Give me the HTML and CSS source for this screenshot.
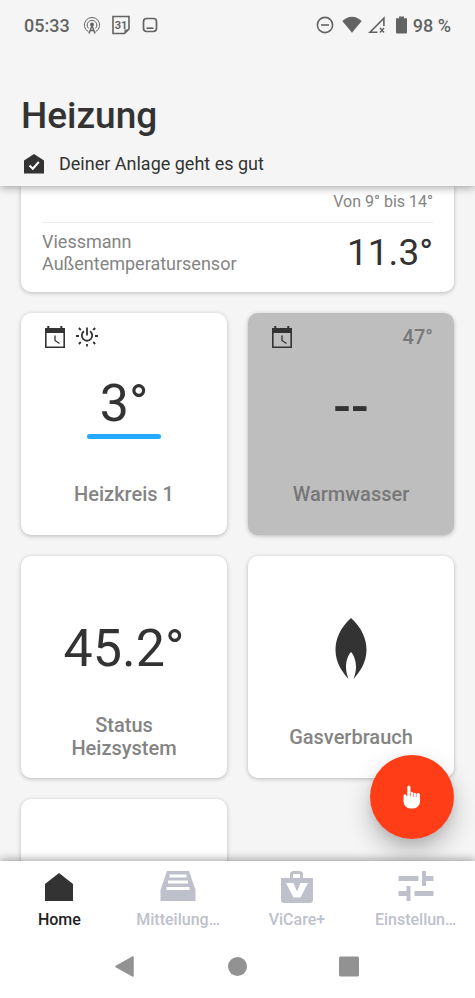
FILE: index.html
```html
<!DOCTYPE html>
<html lang="de">
<head>
<meta charset="utf-8">
<meta name="viewport" content="width=device-width, initial-scale=1">
<title>Heizung</title>
<link rel="stylesheet" href="styles.css">
</head>
<body>
<div class="app">
  <header class="header">
    <div class="statusbar">
      <span class="clock">05:33</span>
      <svg class="s-cast" width="18" height="18" viewBox="0 0 18 18" fill="none" stroke="#636363" stroke-width="1">
        <path d="M5.5 15.8A7.6 7.6 0 1 1 12.500 15.800"/>
        <path d="M5.500 12.400A4.800 4.800 0 1 1 12.500 12.400"/>
        <circle cx="9" cy="8.500" r="2" fill="#636363" stroke="none"/>
        <path d="M9 9.500L6 17.500M9 9.500L12 17.500M7.200 14.500H10.800" stroke-width="1.400"/>
      </svg>
      <svg class="s-cal" width="18" height="20" viewBox="0 0 18 20">
        <path d="M1 1.500H17V14L12.500 18.500H1Z" fill="none" stroke="#636363" stroke-width="1.600"/>
        <path d="M12.500 18.500V14.500H17Z" fill="#636363"/>
        <text x="9" y="13.500" class="cal-day" text-anchor="middle">31</text>
      </svg>
      <svg width="16" height="16" viewBox="0 0 16 16" fill="none" stroke="#636363" stroke-width="1.700">
        <rect x="1.500" y="1.500" width="13" height="13" rx="3.200"/>
        <path d="M4.500 11.200H11.500"/>
      </svg>
      <span class="spacer"></span>
      <svg class="s-dnd" width="18" height="18" viewBox="0 0 18 18" fill="none" stroke="#636363" stroke-width="1.600">
        <circle cx="9" cy="9" r="7.600"/><path d="M5 9H13"/>
      </svg>
      <svg class="s-wifi" width="20" height="18" viewBox="0 0 20 18"><path d="M0.300 5Q10-3.500 19.700 5L10 16.700Z" fill="#636363"/></svg>
      <svg class="s-cell" width="18" height="18" viewBox="0 0 18 18" fill="none" stroke="#636363" stroke-width="1.600">
        <path d="M9.500 16.200H2L15.900 2.300V10"/><path d="M12 12L16 16.500M16 12L12 16.500" stroke-width="1.500"/>
      </svg>
      <svg class="s-bat" width="11" height="18" viewBox="0 0 11 18"><path d="M3 0.500H8V2.200H11V16.500Q11 17.500 10 17.500H1Q0 17.500 0 16.500V2.200H3Z" fill="#636363"/></svg>
      <span>98 %</span>
    </div>
    <h1>Heizung</h1>
    <p class="health">
      <svg width="22" height="22" viewBox="0 0 22 22"><path d="M1 7.500L11 1L21 7.500V20.500H1Z" fill="#333"/><path d="M6.500 12.500L9.800 15.700L15.800 9" fill="none" stroke="#fff" stroke-width="2"/></svg>
      <span>Deiner Anlage geht es gut</span>
    </p>
  </header>

  <main class="content">
    <section class="card outdoor">
      <p class="range">Von 9° bis 14°</p>
      <div class="sensor">
        <span class="sensor-name">Viessmann<br>Außentemperatursensor</span>
        <span class="sensor-value">11.3°</span>
      </div>
    </section>
    <div class="grid">
      <section class="card tile">
        <div class="tile-top">
          <svg width="22" height="24" viewBox="0 0 22 24"><path d="M1 3H21V23H1Z M2.600 8V21.400H19.400V8Z" fill="#333" fill-rule="evenodd"/><path d="M4.300 1V4M17.300 1V4" stroke="#333" stroke-width="2"/><path d="M11 10.500V15.500L15.500 18.500" fill="none" stroke="#333" stroke-width="1.300"/></svg>
          <svg width="24" height="24" viewBox="0 0 24 24" fill="none" stroke="#333" stroke-width="1.800">
            <path d="M12 2.500V10.500"/><path d="M9 6.300A5.200 5.200 0 1 0 15 6.300"/>
            <path d="M1 11H4M20 11H23M12 19V21.500M3.800 3L5.800 5M20.200 3L18.200 5M3.800 19L5.800 17M20.200 19L18.200 17"/>
          </svg>
        </div>
        <div class="value underlined">3°</div>
        <h2>Heizkreis 1</h2>
      </section>
      <section class="card tile off">
        <div class="tile-top">
          <svg width="22" height="24" viewBox="0 0 22 24"><path d="M1 3H21V23H1Z M2.600 8V21.400H19.400V8Z" fill="#333" fill-rule="evenodd"/><path d="M4.300 1V4M17.300 1V4" stroke="#333" stroke-width="2"/><path d="M11 10.500V15.500L15.500 18.500" fill="none" stroke="#333" stroke-width="1.300"/></svg>
          <span class="target">47°</span>
        </div>
        <div class="value dashes">--</div>
        <h2>Warmwasser</h2>
      </section>
      <section class="card tile">
        <div class="value plain">45.2°</div>
        <h2>Status<br>Heizsystem</h2>
      </section>
      <section class="card tile">
        <svg class="flame" width="32" height="62" viewBox="0 0 32 62"><path d="M16 0C27 10 31.500 21 31.500 32C31.500 45 24 55 18.500 61C20 57 21 53 21 49C21 43 19 37 16 34C13 37 11 43 11 49C11 53 12 57 13.500 61C8 55 0.500 45 0.500 32C0.500 21 5 10 16 0Z" fill="#333"/></svg>
        <h2>Gasverbrauch</h2>
      </section>
      <section class="card tile"></section>
    </div>
    <button class="fab" type="button" aria-label="Schnellaktionen">
      <svg width="18" height="24" viewBox="0 0 18 24" fill="#fff"><path d="M4.300 2.200a1.600 1.600 0 0 1 3.200 0V8.200a1.500 1.500 0 0 1 2.900-.2V9a1.500 1.500 0 0 1 2.900 0v.7a1.500 1.500 0 0 1 3.700.5V16.500a7 7 0 0 1-7 7H7.500a7 7 0 0 1-7-7V10.800a1.500 1.500 0 0 1 3 0l.4.700h.4Z"/><path d="M7.500 8V11.500M10.400 9V12M13.300 9.500V12" stroke="#ff3e17" stroke-width=".6"/></svg>
    </button>
  </main>

  <nav class="tabs">
    <a class="tab active" href="#home">
      <svg width="36" height="34" viewBox="0 0 36 34"><path d="M4 13L18 2L32 13V30H4Z" fill="#333"/></svg>
      <span>Home</span>
    </a>
    <a class="tab" href="#mitteilungen">
      <svg width="36" height="34" viewBox="0 0 36 34"><path d="M7 0H29L35.500 19V30H0.500V19Z" fill="#bec1cb"/><path d="M9.500 5H26.500M8 11H28M6.500 17.500H29.500" stroke="#fff" stroke-width="3"/></svg>
      <span>Mitteilung…</span>
    </a>
    <a class="tab" href="#vicare">
      <svg width="36" height="34" viewBox="0 0 36 34"><path d="M12.500 8V3.500Q12.500 1.500 14.500 1.500H20.500Q22.500 1.500 22.500 3.500V8" fill="none" stroke="#bec1cb" stroke-width="3"/><path d="M2 7H34V29Q34 32 31 32H5Q2 32 2 29Z" fill="#bec1cb"/><path d="M7 12H14.500L18 20.500L21.500 12H29L21.500 26.500H14.500Z" fill="#fff"/></svg>
      <span>ViCare+</span>
    </a>
    <a class="tab" href="#einstellungen">
      <svg width="36" height="34" viewBox="0 0 36 34" fill="none" stroke="#bec1cb"><path d="M0.500 7.500H20.500M26 7.500H35.500M0.500 22.500H10M16.500 22.500H35.500" stroke-width="5"/><path d="M26 0V15M10.500 15V30" stroke-width="4"/></svg>
      <span>Einstellun…</span>
    </a>
  </nav>
  <div class="sysnav">
    <button type="button" aria-label="Zurück"><svg width="22" height="22" viewBox="0 0 22 22"><path d="M1 10.500L18 1V20Z" fill="#929292" stroke="#929292" stroke-width="1.500" stroke-linejoin="round"/></svg></button>
    <button type="button" aria-label="Startbildschirm"><svg width="22" height="22" viewBox="0 0 22 22"><circle cx="10.500" cy="10.500" r="9.500" fill="#929292"/></svg></button>
    <button type="button" aria-label="Letzte Apps"><svg width="22" height="22" viewBox="0 0 22 22"><rect x="0" y="0.500" width="20" height="20" rx="1.500" fill="#929292"/></svg></button>
  </div>
</div>
</body>
</html>
```
FILE: styles.css
```css
* { box-sizing: border-box; }

body {
  margin: 0;
  background: #f5f5f5;
  color: #333;
  font-family: Roboto, "Liberation Sans", sans-serif;
}

h1, h2, p { margin: 0; }

svg { display: block; flex: none; }

button {
  border: 0;
  padding: 0;
  background: none;
}

.app {
  display: flex;
  flex-direction: column;
  height: 100vh;
}

.header {
  position: relative;
  z-index: 2;
  padding: 12px 21px 10px;
  background: #f5f5f5;
  box-shadow: 0 1px 9px rgba(0, 0, 0, .4);
}

.statusbar {
  display: flex;
  align-items: center;
  height: 26px;
  padding: 0 3px;
  color: #636363;
  font-size: 18px;
  font-weight: 500;
}

.clock { margin-right: 13px; }
.s-cast { margin-right: 11px; }
.s-cal { margin-right: 12px; }
.s-dnd { margin-right: 8px; }
.s-wifi { margin-right: 6px; }
.s-cell { margin-right: 10px; }
.s-bat { margin-right: 6px; }
.spacer { flex: 1; }

.cal-day {
  fill: #636363;
  font-size: 11px;
  font-weight: 700;
}

h1 {
  margin-top: 56px;
  font-size: 37px;
  font-weight: 500;
  line-height: 44px;
}

.health {
  display: flex;
  align-items: center;
  gap: 14px;
  margin-top: 14px;
  padding-left: 2px;
  font-size: 18px;
  line-height: 24px;
}

.content {
  position: relative;
  flex: 1;
  min-height: 0;
  padding: 0 21px;
  overflow: hidden;
}

.card {
  border-radius: 10px;
  background: #fff;
  box-shadow: 0 1px 4px rgba(0, 0, 0, .25);
}

.outdoor {
  padding: 6px 21px 17px;
  border-radius: 0 0 10px 10px;
}

.range {
  padding-bottom: 10px;
  border-bottom: 1px solid #ececec;
  color: #848484;
  font-size: 16px;
  line-height: 20px;
  text-align: right;
}

.sensor {
  display: flex;
  align-items: center;
  justify-content: space-between;
  padding-top: 8px;
}

.sensor-name {
  color: #848484;
  font-size: 18px;
  line-height: 22px;
}

.sensor-value {
  font-size: 37px;
  line-height: 44px;
}

.grid {
  display: grid;
  grid-template-columns: 1fr 1fr;
  gap: 21px;
  margin-top: 21px;
}

.tile {
  display: flex;
  flex-direction: column;
  align-items: center;
  height: 222px;
  padding: 12px 21px 18px;
}

.tile.off { background: #bebebe; }

.tile-top {
  display: flex;
  align-items: center;
  align-self: stretch;
  gap: 9px;
  height: 24px;
  padding-left: 2px;
}

.target {
  margin-left: auto;
  color: #777;
  font-size: 20px;
  font-weight: 500;
}

.value {
  font-size: 52px;
  line-height: 60px;
}

.underlined {
  width: 74px;
  margin-top: 25px;
  text-align: center;
}

.underlined::after {
  content: "";
  display: block;
  height: 5px;
  border-radius: 3px;
  background: #23a9ff;
}

.dashes {
  margin-top: 28px;
  font-weight: 500;
}

.plain { margin-top: 51px; }

.flame { margin-top: 50px; }

h2 {
  display: flex;
  align-items: center;
  min-height: 46px;
  margin-top: auto;
  color: #848484;
  font-size: 20px;
  font-weight: 500;
  line-height: 23px;
  text-align: center;
}

.off h2 { color: #777; }

.fab {
  position: absolute;
  right: 21px;
  bottom: 22px;
  display: grid;
  place-items: center;
  width: 84px;
  height: 84px;
  border-radius: 50%;
  background: #ff3e17;
  box-shadow: 0 12px 24px rgba(0, 0, 0, .25), 0 4px 8px rgba(0, 0, 0, .06);
}

.tabs {
  position: relative;
  z-index: 2;
  display: grid;
  grid-template-columns: repeat(4, 1fr);
  padding: 10px 0 5px;
  background: #fff;
  box-shadow: 0 -1px 9px rgba(0, 0, 0, .4);
}

.tab {
  display: flex;
  flex-direction: column;
  align-items: center;
  gap: 5px;
  color: #bec1cb;
  font-size: 16px;
  font-weight: 500;
  line-height: 20px;
  text-decoration: none;
}

.tab.active { color: #222; }

.sysnav {
  position: relative;
  z-index: 3;
  display: flex;
  align-items: center;
  justify-content: center;
  gap: 90px;
  height: 63px;
  background: #fff;
}
```
